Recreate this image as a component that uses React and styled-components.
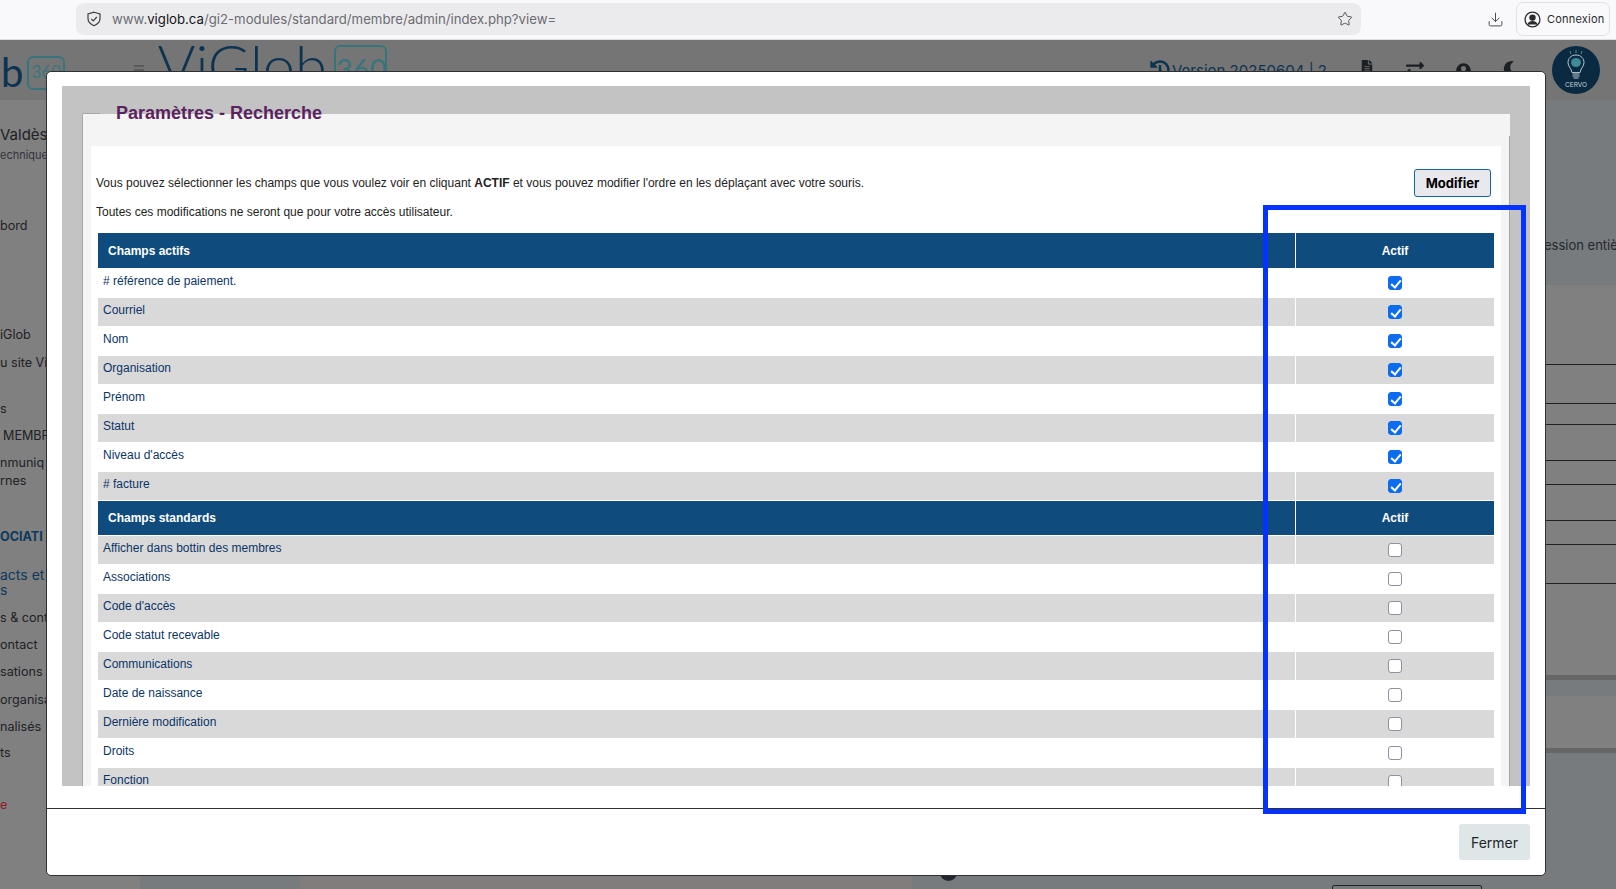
import React from 'react';
import styled, { createGlobalStyle } from 'styled-components';
import { Download, Star } from 'lucide-react';
import {
  FaExchangeAlt,
  FaFileAlt,
  FaHistory,
  FaMoon,
  FaUserCircle,
} from 'react-icons/fa';

const activeFields = [
  '# référence de paiement.',
  'Courriel',
  'Nom',
  'Organisation',
  'Prénom',
  'Statut',
  "Niveau d'accès",
  '# facture',
];

const standardFields = [
  'Afficher dans bottin des membres',
  'Associations',
  "Code d'accès",
  'Code statut recevable',
  'Communications',
  'Date de naissance',
  'Dernière modification',
  'Droits',
  'Fonction',
];

// texte du menu derriere le modal: at = centre vertical de la ligne
const menuLines = [
  { text: 'Valdès', at: 135, size: 15 },
  { text: 'echnique', at: 155, size: 11, tone: '#34343f' },
  { text: 'bord', at: 226 },
  { text: 'iGlob', at: 335 },
  { text: 'u site Vi', at: 363 },
  { text: 's', at: 409 },
  { text: 'MEMBR', at: 436, indent: 3 },
  { text: 'nmuniq', at: 463 },
  { text: 'rnes', at: 481 },
  { text: 'OCIATI', at: 537, tone: '#0d3a5c', bold: true },
  { text: 'acts et', at: 575, tone: '#0d3a5c', size: 14 },
  { text: 's', at: 590, tone: '#0d3a5c', size: 14 },
  { text: 's & cont', at: 618 },
  { text: 'ontact', at: 645 },
  { text: 'sations', at: 672 },
  { text: 'organisa', at: 700 },
  { text: 'nalisés', at: 727 },
  { text: 'ts', at: 753 },
  { text: 'e', at: 805, tone: '#8c1c2c' },
];

const stripeRows = [80, 39, 21, 36, 24, 36, 24, 39, 91];

const GlobalStyle = createGlobalStyle`
  html, body {
    margin: 0;
    height: 889px;
    overflow: hidden;
    background: #777b7d;
  }
  * {
    box-sizing: border-box;
  }
`;

const Page = styled.div`
  position: relative;
  width: 1616px;
  height: 889px;
  overflow: hidden;
  display: flex;
  flex-direction: column;
  font-family: Inter, 'Noto Sans', sans-serif;
`;

const BrowserBar = styled.div`
  height: 40px;
  flex: none;
  display: flex;
  align-items: center;
  padding: 0 6px 1px 77px;
  background: #f9f9fb;
  border-bottom: 1px solid #dedee2;
`;

const UrlField = styled.div`
  width: 1286px;
  height: 32px;
  margin-left: -1px;
  display: flex;
  align-items: center;
  padding: 0 8px 0 10px;
  border-radius: 8px;
  background: #ebebed;
  color: #6c6c72;
  font-size: 13.2px;
`;

const UrlText = styled.span`
  margin-left: 10px;
  flex: 1;
  b {
    font-weight: 400;
    color: #15141a;
  }
`;

const ToolbarIcon = styled.div`
  display: flex;
  margin-left: ${(p) => p.$left}px;
  color: #4a4a50;
`;

const LoginButton = styled.div`
  margin-left: 12px;
  width: 94px;
  height: 34px;
  display: flex;
  align-items: center;
  gap: 6px;
  padding-left: 7px;
  border: 1px solid #e0e0e6;
  border-radius: 7px;
  color: #2a2a2e;
  font-size: 11px;
  letter-spacing: 0.2px;
`;

const Site = styled.div`
  flex: 1;
  min-height: 0;
  display: flex;
  flex-direction: column;
`;

const SiteHeader = styled.header`
  height: 60px;
  flex: none;
  display: flex;
  align-items: flex-start;
  padding-right: 16px;
  overflow: hidden;
  background: #757575;
  color: #0c3350;
`;

const LogoWord = styled.span`
  font-family: Lato, sans-serif;
  font-weight: ${(p) => p.$weight};
  font-size: ${(p) => p.$size}px;
  line-height: 1;
  margin: ${(p) => p.$margin};
`;

const LogoBadge = styled.span`
  flex: none;
  width: ${(p) => p.$width}px;
  height: ${(p) => p.$height}px;
  margin: ${(p) => p.$margin};
  padding-top: ${(p) => p.$inset}px;
  text-align: center;
  border: 2px solid #36757d;
  border-radius: 6px;
  color: #36757d;
  font-family: Lato, sans-serif;
  font-size: ${(p) => p.$text}px;
  line-height: 1;
`;

const MenuToggle = styled.span`
  flex: none;
  width: 10px;
  height: 6px;
  margin: 25px 13px 0 69px;
  border-top: 2px solid #5b5b5b;
  border-bottom: 2px solid #5b5b5b;
`;

const VersionTag = styled.div`
  margin: 20px 0 0 auto;
  display: flex;
  align-items: flex-start;
  gap: 2px;
  color: #0c3350;
  font-size: 15px;
  line-height: 22px;
  white-space: nowrap;
`;

const HeaderIcon = styled.div`
  margin: ${(p) => p.$top}px 0 0 ${(p) => p.$left}px;
  display: flex;
  color: #1c2024;
`;

const Avatar = styled.svg`
  margin: 6px 0 0 33px;
  flex: none;
`;

const SiteBody = styled.div`
  flex: 1;
  min-height: 0;
  display: flex;
`;

const Sidebar = styled.nav`
  width: 140px;
  flex: none;
  display: flex;
  flex-direction: column;
  background: #808080;
  overflow: hidden;
`;

const MenuLine = styled.div`
  height: 18px;
  flex: none;
  margin-top: ${(p) => p.$gap}px;
  padding-left: ${(p) => p.$indent || 0}px;
  color: ${(p) => p.$tone || '#202226'};
  font-size: ${(p) => p.$size || 12.6}px;
  font-weight: ${(p) => (p.$bold ? 700 : 400)};
  line-height: 18px;
  white-space: nowrap;
`;

const SiteMain = styled.main`
  flex: 1;
  min-width: 0;
  display: flex;
  flex-direction: column;
`;

const IntroBand = styled.div`
  height: 185px;
  flex: none;
  padding: 135px 0 0 1404px;
  background: #777b7d;
  color: #26282c;
  font-size: 13px;
  line-height: 20px;
  white-space: nowrap;
  overflow: hidden;
`;

const StripeRow = styled.div`
  flex: none;
  height: ${(p) => p.$height}px;
  background: #808080;
  border-bottom: ${(p) => (p.$open ? 0 : '1px solid #202226')};
`;

const Band = styled.div`
  flex: none;
  height: ${(p) => p.$height}px;
  background: ${(p) => p.$color};
`;

const BottomRow = styled.div`
  flex: 1;
  display: flex;
  background: #777b7d;
`;

const BottomWarm = styled.div`
  width: 612px;
  margin-left: 160px;
  background: #807d7c;
`;

const BottomDot = styled.span`
  width: 17px;
  height: 17px;
  margin: 111px 0 0 28px;
  border-radius: 50%;
  background: #23262e;
`;

const BottomBox = styled.span`
  width: 150px;
  height: 20px;
  margin: 132px 0 0 375px;
  border: 1px solid #202226;
  border-radius: 2px;
`;

const Modal = styled.div`
  position: absolute;
  left: 46px;
  top: 71px;
  width: 1500px;
  height: 805px;
  display: flex;
  flex-direction: column;
  background: #fff;
  border: 1px solid #2e3032;
  border-radius: 5px;
`;

const ModalBody = styled.div`
  flex: 1;
  min-height: 0;
  padding: 14px 15px 22px;
`;

const GrayPanel = styled.div`
  height: 100%;
  padding: 17px 20px 0;
  overflow: hidden;
  background: #c3c3c3;
`;

const FieldBox = styled.fieldset`
  margin: 0;
  min-width: 0;
  padding: 12px 8px 0;
  border: 0;
  border-left: 1px solid #a8a8a8;
  background: #f4f4f4;
`;

const Legend = styled.legend`
  position: relative;
  margin-left: 25px;
  padding: 0;
  color: #5a2360;
  font-family: 'Liberation Sans', Arial, sans-serif;
  font-size: 18px;
  font-weight: 700;
  line-height: 21px;
  &::before {
    content: '';
    position: absolute;
    left: -33px;
    top: 10px;
    width: 17px;
    height: 1px;
    background: #a8a8a8;
  }
`;

const FieldInner = styled.div`
  margin-right: -8px;
  padding: 10px 8px 0 0;
  border-right: 1px solid #a8a8a8;
`;

const WhiteSheet = styled.div`
  padding: 23px 5px 0 5px;
  background: #fff;
  font-family: 'Liberation Sans', Arial, sans-serif;
`;

const IntroRow = styled.div`
  height: 63px;
  display: flex;
  justify-content: space-between;
  align-items: flex-start;
`;

const IntroText = styled.div`
  padding-top: 7px;
  p {
    margin: 0 0 15px;
    color: #222;
    font-size: 12px;
    line-height: 14px;
  }
`;

const EditButton = styled.button`
  width: 77px;
  height: 28px;
  margin-right: 5px;
  padding: 0;
  background: #e9e9ed;
  border: 1px solid #1264a3;
  border-radius: 3px;
  color: #000;
  font-family: Inter, sans-serif;
  font-size: 13px;
  font-weight: 700;
`;

const FieldTable = styled.table`
  width: 1398px;
  margin-left: 1px;
  table-layout: fixed;
  border-collapse: separate;
  border-spacing: 1px;
  font-size: 12px;
`;

const HeadCell = styled.th`
  height: ${(p) => p.$height}px;
  padding: 0 10px;
  background: #0f4c7d;
  color: #fff;
  font-weight: 700;
  text-align: ${(p) => (p.$center ? 'center' : 'left')};
  width: ${(p) => (p.$center ? '198px' : 'auto')};
`;

const BodyRow = styled.tr`
  td {
    background: ${(p) => (p.$shaded ? '#d9d9d9' : '#fff')};
  }
`;

const LabelCell = styled.td`
  height: 28px;
  padding: 5px 5px 0;
  color: #0b3566;
  line-height: 14px;
  vertical-align: top;
`;

const CheckCell = styled.td`
  height: 28px;
  padding: 0;
  text-align: center;
  vertical-align: top;
`;

const CheckBox = styled.input.attrs({ type: 'checkbox', readOnly: true })`
  appearance: none;
  position: relative;
  display: inline-block;
  width: 14px;
  height: 14px;
  margin: 7px 0 0;
  vertical-align: top;
  background: #fff;
  border: 1px solid #8f8f9d;
  border-radius: 3px;

  &:checked {
    background: #0b6cf0;
    border-color: #0b6cf0;
  }
  &:checked::after {
    content: '';
    position: absolute;
    left: 4px;
    top: 1px;
    width: 4px;
    height: 8px;
    border: solid #fff;
    border-width: 0 2px 2px 0;
    transform: rotate(40deg);
  }
`;

const ModalFooter = styled.div`
  height: 67px;
  flex: none;
  display: flex;
  justify-content: flex-end;
  padding: 15px 15px 0 0;
  border-top: 1px solid #2e3032;
`;

const CloseButton = styled.button`
  width: 71px;
  height: 36px;
  padding: 0;
  background: #dfe6e8;
  border: 0;
  border-radius: 3px;
  color: #212529;
  font-family: Inter, sans-serif;
  font-size: 14px;
`;

const Highlight = styled.div`
  position: absolute;
  left: 1263px;
  top: 205px;
  width: 263px;
  height: 609px;
  border: 5px solid #0433ff;
  pointer-events: none;
`;

const ShieldIcon = () => (
  <svg width="16" height="16" viewBox="0 0 16 16" fill="none" stroke="#3c3c42" strokeWidth="1.2">
    <path d="M8 1.2 14 3v4.6c0 3.4-2.6 5.8-6 7.2-3.4-1.4-6-3.8-6-7.2V3z" />
    <path d="m5.2 7.8 2 2 3.6-3.8" />
  </svg>
);

const AccountIcon = () => (
  <svg width="17" height="17" viewBox="0 0 16 16" fill="none" stroke="#2a2a2e" strokeWidth="1.2">
    <circle cx="8" cy="8" r="7" />
    <circle cx="8" cy="6.2" r="2.4" fill="#2a2a2e" />
    <path d="M3.8 12.6c.8-1.8 2.4-2.6 4.2-2.6s3.4.8 4.2 2.6" fill="#2a2a2e" />
  </svg>
);

const CervoLogo = () => (
  <Avatar width="48" height="48" viewBox="0 0 48 48">
    <circle cx="24" cy="24" r="24" fill="#0a2a42" />
    <path d="M24 4v3M18 5l1 3M30 5l-1 3" stroke="#4e8c96" strokeWidth="1" />
    <path
      d="M24 9c-5 0-8 3.6-8 7.6 0 4 3.4 5.6 4 10h8c.6-4.4 4-6 4-10 0-4-3-7.6-8-7.6z"
      fill="none"
      stroke="#b8c8cf"
      strokeWidth="1"
    />
    <ellipse cx="24" cy="16.5" rx="5" ry="4.5" fill="#3f8a94" />
    <path d="M20.5 28h7M20.5 30h7M21.5 32h5" stroke="#b8c8cf" strokeWidth="1.2" />
    <text x="24" y="41" fill="#c4d2d8" fontSize="6.5" textAnchor="middle" fontFamily="Inter, sans-serif">
      CERVO
    </text>
  </Avatar>
);

const renderRows = (fields, firstShaded, checked) =>
  fields.map((field, index) => (
    <BodyRow key={field} $shaded={(index % 2 === 0) === firstShaded}>
      <LabelCell>{field}</LabelCell>
      <CheckCell>
        <CheckBox checked={checked} />
      </CheckCell>
    </BodyRow>
  ));

const App = () => {
  return (
    <Page>
      <GlobalStyle />
      <BrowserBar>
        <UrlField>
          <ShieldIcon />
          <UrlText>
            www.<b>viglob.ca</b>/gi2-modules/standard/membre/admin/index.php?view=
          </UrlText>
          <ToolbarIcon $left={0}>
            <Star size={16} strokeWidth={1.4} />
          </ToolbarIcon>
        </UrlField>
        <ToolbarIcon $left={126}>
          <Download size={17} strokeWidth={1.4} />
        </ToolbarIcon>
        <LoginButton>
          <AccountIcon />
          Connexion
        </LoginButton>
      </BrowserBar>

      <Site>
        <SiteHeader>
          <LogoWord $size={40} $weight={400} $margin="12px 0 0 1px">
            b
          </LogoWord>
          <LogoBadge $width={38} $height={34} $text={17} $inset={5} $margin="16px 0 0 4px">
            360
          </LogoBadge>
          <MenuToggle />
          <LogoWord $size={58} $weight={300} $margin="-4px 0 0 0">
            ViGlob
          </LogoWord>
          <LogoBadge $width={53} $height={48} $text={29} $inset={7} $margin="5px 0 0 7px">
            360
          </LogoBadge>
          <VersionTag>
            <FaHistory size={20} />
            Version 20250604 | 2
          </VersionTag>
          <HeaderIcon $top={20} $left={33}>
            <FaFileAlt size={14} />
          </HeaderIcon>
          <HeaderIcon $top={20} $left={32}>
            <FaExchangeAlt size={18} />
          </HeaderIcon>
          <HeaderIcon $top={23} $left={32}>
            <FaUserCircle size={15} />
          </HeaderIcon>
          <HeaderIcon $top={21} $left={32}>
            <FaMoon size={16} />
          </HeaderIcon>
          <CervoLogo />
        </SiteHeader>

        <SiteBody>
          <Sidebar>
            {menuLines.map((line, index) => (
              <MenuLine
                key={line.at}
                $gap={line.at - (index ? menuLines[index - 1].at + 18 : 100 + 9)}
                $indent={line.indent}
                $tone={line.tone}
                $size={line.size}
                $bold={line.bold}
              >
                {line.text}
              </MenuLine>
            ))}
          </Sidebar>
          <SiteMain>
            <IntroBand>ession entière</IntroBand>
            {stripeRows.map((height, index) => (
              <StripeRow key={index} $height={height} $open={index === stripeRows.length - 1} />
            ))}
            <Band $height={5} $color="#666" />
            <Band $height={16} $color="#777b7d" />
            <Band $height={52} $color="#808080" />
            <Band $height={5} $color="#666" />
            <BottomRow>
              <BottomWarm />
              <BottomDot />
              <BottomBox />
            </BottomRow>
          </SiteMain>
        </SiteBody>
      </Site>

      <Modal>
        <ModalBody>
          <GrayPanel>
            <FieldBox>
              <Legend>Paramètres - Recherche</Legend>
              <FieldInner>
                <WhiteSheet>
                  <IntroRow>
                    <IntroText>
                      <p>
                        Vous pouvez sélectionner les champs que vous voulez voir en cliquant{' '}
                        <b>ACTIF</b> et vous pouvez modifier l'ordre en les déplaçant avec votre
                        souris.
                      </p>
                      <p>Toutes ces modifications ne seront que pour votre accès utilisateur.</p>
                    </IntroText>
                    <EditButton>Modifier</EditButton>
                  </IntroRow>
                  <FieldTable>
                    <tbody>
                      <tr>
                        <HeadCell $height={35}>Champs actifs</HeadCell>
                        <HeadCell $height={35} $center>
                          Actif
                        </HeadCell>
                      </tr>
                      {renderRows(activeFields, false, true)}
                      <tr>
                        <HeadCell $height={34}>Champs standards</HeadCell>
                        <HeadCell $height={34} $center>
                          Actif
                        </HeadCell>
                      </tr>
                      {renderRows(standardFields, true, false)}
                    </tbody>
                  </FieldTable>
                </WhiteSheet>
              </FieldInner>
            </FieldBox>
          </GrayPanel>
        </ModalBody>
        <ModalFooter>
          <CloseButton>Fermer</CloseButton>
        </ModalFooter>
      </Modal>

      <Highlight />
    </Page>
  );
};

export default App;
